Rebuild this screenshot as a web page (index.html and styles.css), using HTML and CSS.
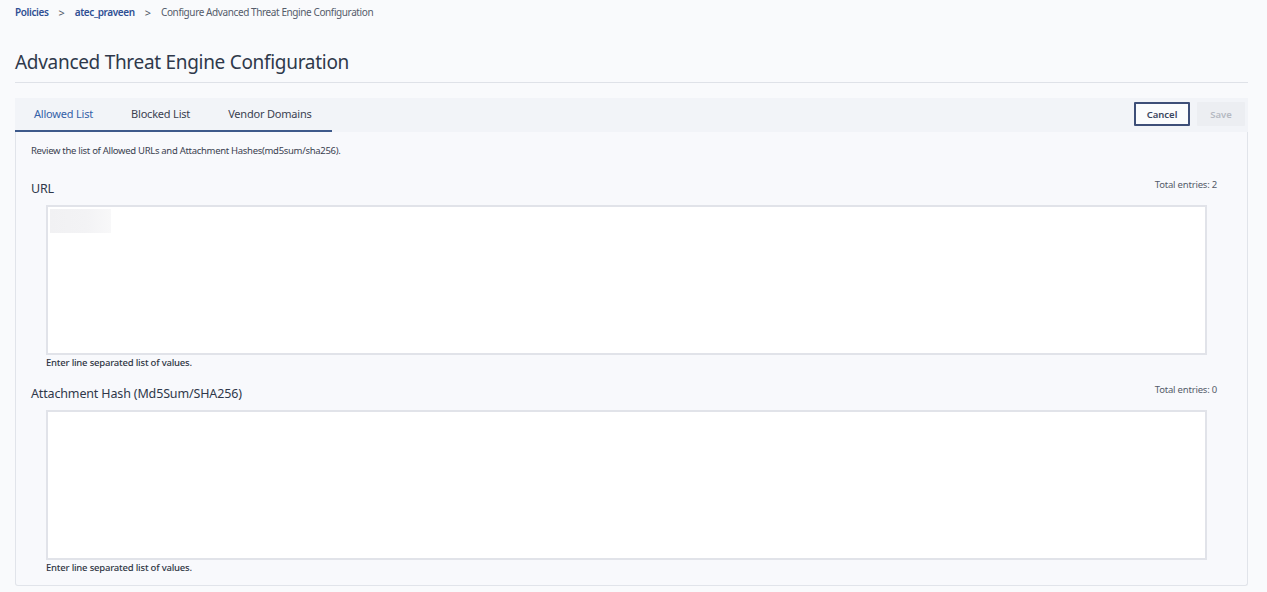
FILE: index.html
```html
<!DOCTYPE html>
<html lang="en">
<head>
<meta charset="utf-8">
<title>Advanced Threat Engine Configuration</title>
<link rel="stylesheet" href="styles.css">
</head>
<body>
<div class="page">
  <nav class="crumbs">
    <a class="crumb-link" href="#">Policies</a>
    <span class="sep">&gt;</span>
    <a class="crumb-link" href="#">atec_praveen</a>
    <span class="sep">&gt;</span>
    <span class="crumb-current">Configure Advanced Threat Engine Configuration</span>
  </nav>

  <h1 class="title">Advanced Threat Engine Configuration</h1>

  <div class="tabbar">
    <div class="tabs">
      <button class="tab active">Allowed List</button>
      <button class="tab">Blocked List</button>
      <button class="tab">Vendor Domains</button>
    </div>
    <div class="actions">
      <button class="btn btn-cancel">Cancel</button>
      <button class="btn btn-save" disabled>Save</button>
    </div>
  </div>

  <section class="panel">
    <p class="intro">Review the list of Allowed URLs and Attachment Hashes(md5sum/sha256).</p>

    <div class="field">
      <div class="field-head">
        <h2 class="field-label">URL</h2>
        <span class="count">Total entries: 2</span>
      </div>
      <div class="textbox">
        <div class="skeleton"></div>
      </div>
      <p class="help">Enter line separated list of values.</p>
    </div>

    <div class="field">
      <div class="field-head">
        <h2 class="field-label">Attachment Hash (Md5Sum/SHA256)</h2>
        <span class="count">Total entries: 0</span>
      </div>
      <div class="textbox"></div>
      <p class="help">Enter line separated list of values.</p>
    </div>
  </section>
</div>
</body>
</html>
```

FILE: styles.css
```css
* { box-sizing: border-box; }

html, body {
  margin: 0;
  background: #f9fafc;
  font-family: "Noto Sans", "Open Sans", "Liberation Sans", sans-serif;
  color: #333b4a;
}

.page {
  padding: 0 19px 0 15px;
}

/* breadcrumb trail */
.crumbs {
  height: 24px;
  display: flex;
  align-items: center;
  font-size: 10px;
  letter-spacing: -0.4px;
}
.crumb-link {
  color: #2f4f93;
  font-weight: 600;
  text-decoration: none;
}
.sep {
  color: #4f5766;
  margin: 0 10px;
  font-size: 11px;
  letter-spacing: 0;
}
.crumb-current {
  color: #555c6b;
}

.title {
  margin: 0;
  padding: 25px 0 7px;
  font-size: 19px;
  letter-spacing: -0.3px;
  font-weight: 400;
  color: #2f394b;
  line-height: 26px;
  border-bottom: 1px solid #dfe2e8;
}

/* tabs row */
.tabbar {
  margin-top: 15px;
  height: 34px;
  background: #f2f4f8;
  display: flex;
  justify-content: space-between;
  align-items: stretch;
}
.tabs {
  display: flex;
  border-bottom: 2px solid #3e5a8b;
}
.tab {
  border: 0;
  background: transparent;
  font-family: inherit;
  font-size: 11px;
  letter-spacing: -0.2px;
  color: #3a4150;
  padding: 0 19px;
  margin: 0;
  cursor: pointer;
  line-height: 16px;
}
.tab:last-child { padding-right: 20px; }
.tab.active {
  color: #3561a8;
}
.actions {
  display: flex;
  align-items: center;
  gap: 7px;
  padding-right: 3px;
  padding-bottom: 2px;
}
.btn {
  height: 24px;
  font-family: inherit;
  font-size: 9.5px;
  font-weight: 600;
  border-radius: 1px;
  padding: 0;
}
.btn-cancel {
  width: 56px;
  border: 2px solid #3e4f78;
  background: #fbfcfd;
  color: #3a4660;
}
.btn-save {
  width: 48px;
  border: 0;
  background: #eceef2;
  color: #b5b9c2;
}

/* content area */
.panel {
  background: #f8f9fc;
  border: 1px solid #e1e4ea;
  border-top: 0;
  border-radius: 0 0 3px 3px;
  padding: 12px 30px 11px 15px;
}
.intro {
  margin: 0;
  font-size: 9.5px;
  letter-spacing: -0.3px;
  color: #3a4150;
  line-height: 14px;
}
.field {
  margin-top: 20px;
}
.field + .field {
  margin-top: 14px;
}
.field-head {
  display: flex;
  justify-content: space-between;
  align-items: flex-start;
  height: 27px;
  padding-top: 2px;
}
.field-label {
  margin: 0;
  font-size: 12.5px;
  letter-spacing: -0.15px;
  font-weight: 400;
  color: #2f384a;
  line-height: 18px;
}
.count {
  font-size: 9.5px;
  letter-spacing: -0.2px;
  color: #545b69;
  line-height: 10px;
}
.textbox {
  margin-left: 15px;
  margin-right: 10px;
  height: 150px;
  background: #ffffff;
  border: 2px solid #e1e3e9;
  padding: 2px;
}
.skeleton {
  width: 61px;
  height: 24px;
  background: linear-gradient(90deg, #f1f1f3 0%, #f3f3f5 60%, #f8f8f9 100%);
}
.help {
  margin: 1px 0 0 15px;
  font-size: 9.5px;
  letter-spacing: -0.2px;
  font-weight: 500;
  color: #2f3644;
  line-height: 13px;
}
```
